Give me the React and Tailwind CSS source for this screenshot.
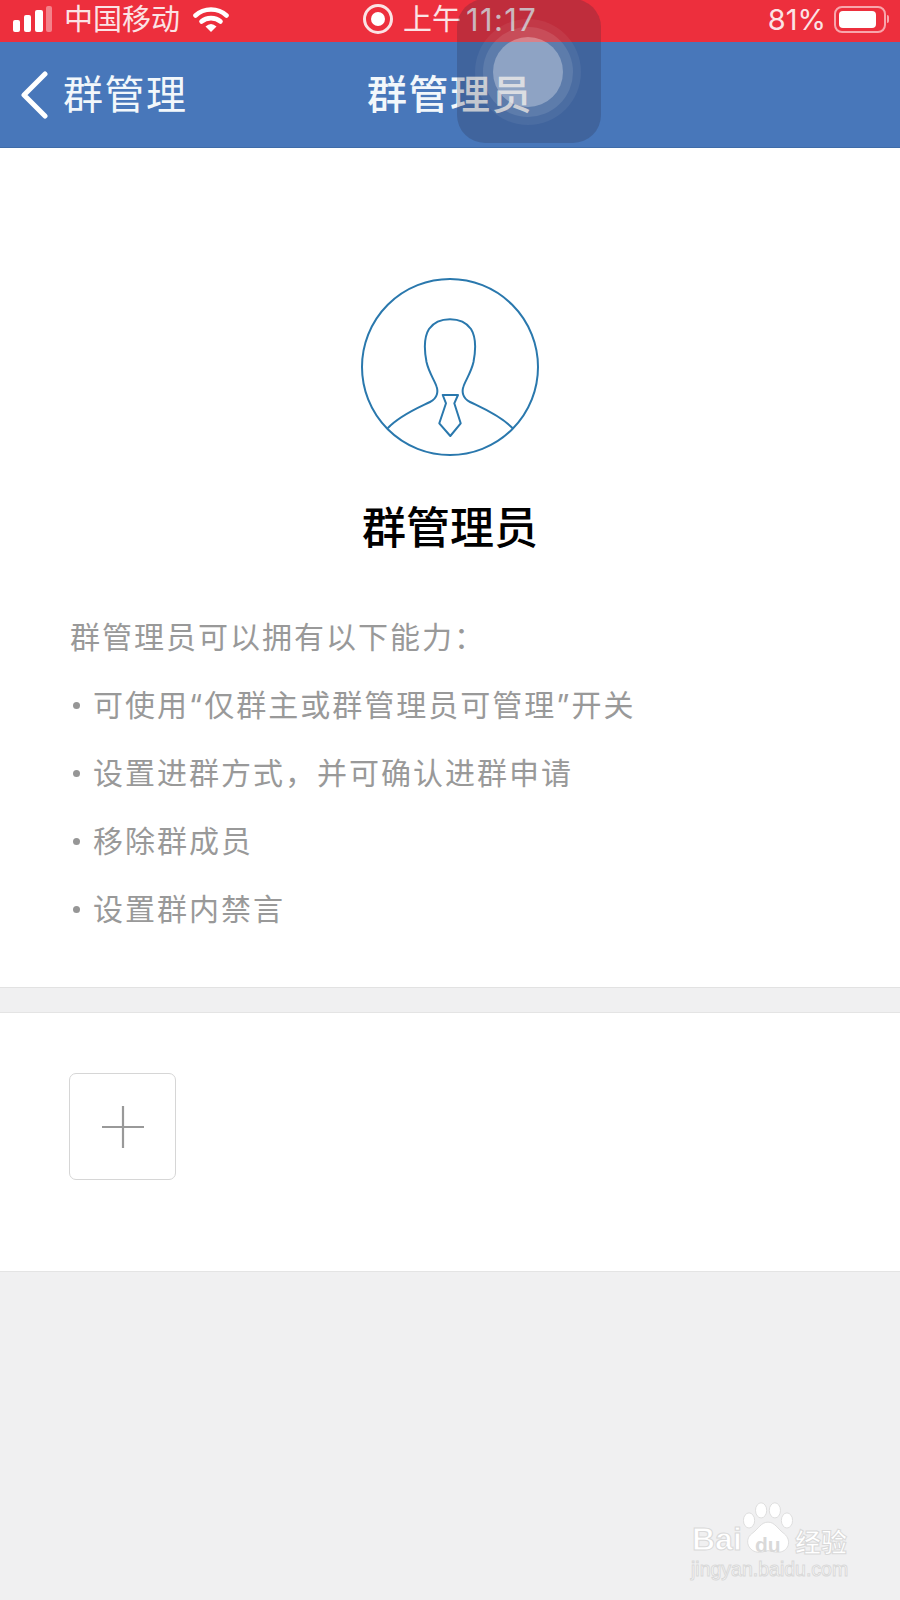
const FONT = "font-['Inter','Noto_Sans_CJK_SC',sans-serif]";

const ABILITIES = [
  '可使用“仅群主或群管理员可管理”开关',
  '设置进群方式，并可确认进群申请',
  '移除群成员',
  '设置群内禁言',
];

function SignalBars() {
  return (
    <svg width="40" height="27" viewBox="0 0 40 27" className="block">
      <rect x="0" y="14" width="7" height="12" rx="2" fill="#fff" />
      <rect x="11" y="9" width="7" height="17" rx="2" fill="#fff" />
      <rect x="22" y="4" width="8" height="22" rx="2" fill="#fff" />
      <rect x="33" y="0" width="6" height="26" rx="2" fill="#fff" fillOpacity="0.4" />
    </svg>
  );
}

function WifiGlyph() {
  return (
    <svg width="36" height="26" viewBox="0 0 36 26" className="block">
      <path d="M2.5 9.5C11 1.5 25 1.5 33.5 9.5" fill="none" stroke="#fff" strokeWidth="4.6" strokeLinecap="round" />
      <path d="M8.5 15.5C13.5 11 22.5 11 27.5 15.5" fill="none" stroke="#fff" strokeWidth="4.6" strokeLinecap="round" />
      <path d="M12.5 20.5Q18 15.5 23.5 20.5L18 26Z" fill="#fff" />
    </svg>
  );
}

function StatusBar() {
  return (
    <div className="flex h-[42px] items-center bg-[#ed2f3d] pb-[4px] text-[29px] leading-none text-[#fbe3e5]">
      <div className="flex w-[363px] items-center pl-[13px]">
        <SignalBars />
        <span className="ml-[11px] w-[129px]">中国移动</span>
        <WifiGlyph />
      </div>
      <div className="flex items-center">
        <span className="flex h-[30px] w-[30px] items-center justify-center rounded-full border-[3px] border-[#fbe3e5]">
          <span className="h-[14px] w-[14px] rounded-full bg-white" />
        </span>
        <span className="ml-[10px]">上午</span>
        <span className="ml-[5px] text-[31px] tracking-[1.4px]">11:17</span>
      </div>
      <div className="ml-auto flex items-center pr-[11px]">
        <span className="mr-[2px]">81%</span>
        <span className="ml-[6px] flex h-[27px] w-[52px] items-center rounded-[8px] border-2 border-[#f8a6ac] p-[3px]">
          <span className="h-full w-[37px] rounded-[4px] bg-white" />
        </span>
        <span className="ml-[1px] h-[8px] w-[2px] rounded-r bg-[#f8a6ac]" />
      </div>
    </div>
  );
}

function NavBar() {
  return (
    <div className="grid h-[106px] grid-cols-[1fr_auto_1fr] items-center border-b border-[#3f6ca8] bg-[#4877ba] text-[40px] leading-none tracking-[1.5px] text-[#f2f7fb]">
      <div className="flex items-center pl-[20px]">
        <svg width="28" height="48" viewBox="0 0 28 48" className="block">
          <path d="M25 3L4 24L25 45" fill="none" stroke="#fff" strokeWidth="5" strokeLinecap="round" strokeLinejoin="round" />
        </svg>
        <span className="ml-[15px]">群管理</span>
      </div>
      <div className="font-medium">群管理员</div>
      <div />
    </div>
  );
}

function AdminAvatar() {
  return (
    <svg width="180" height="180" viewBox="0 0 180 180" className="block" fill="none" stroke="#2a78ad" strokeWidth="2" strokeLinejoin="round">
      <circle cx="90" cy="90" r="88" />
      <path d="M27.7 151.3C40 138 60 130 70 125C78 121 78 114 76.7 110C75 104 69 96 66.5 85C64 72 64 60 69 52C74 45 82 42.3 90 42.3C98 42.3 106 45 111 52C116 60 116 72 113.5 85C111 96 105 104 103.3 110C102 114 102 121 110 125C120 130 140 138 152.7 151.3" />
      <path d="M82.7 118H98L94.3 126.3L100.7 146.3L90.3 159L79.3 146.3L86 126.3Z" />
    </svg>
  );
}

function AssistiveTouch() {
  return (
    <div className="absolute left-[457px] top-[-1px] flex h-[144px] w-[144px] items-center justify-center rounded-[28px] bg-[rgba(40,40,60,0.23)]">
      <div className="flex h-[106px] w-[106px] -translate-x-[1px] translate-y-[1px] items-center justify-center rounded-full bg-white/[0.06]">
        <div className="flex h-[90px] w-[90px] items-center justify-center rounded-full bg-white/10">
          <div className="h-[70px] w-[70px] rounded-full bg-white/30" />
        </div>
      </div>
    </div>
  );
}

function Watermark() {
  const stroke = '[-webkit-text-stroke:1px_#d9d9d9] text-white';
  return (
    <div className="absolute left-[689px] top-[1501px] h-[90px] w-[162px] font-['Liberation_Sans','Noto_Sans_CJK_SC',sans-serif]">
      <svg width="50" height="52" viewBox="3 0 58 62" preserveAspectRatio="none" className="absolute left-[54px] top-[1px]" fill="#fff" stroke="#d9d9d9" strokeWidth="1">
        <ellipse cx="10" cy="22" rx="6.5" ry="9" />
        <ellipse cx="24" cy="10" rx="6.5" ry="9" />
        <ellipse cx="40" cy="10" rx="6.5" ry="9" />
        <ellipse cx="54" cy="22" rx="6.5" ry="9" />
        <path d="M32 24C24 24 21 32 13 38C4 45 9 60 22 60C27 60 29 58 32 58C36 58 38 60 43 60C56 60 60 46 51 38C43 32 40 24 32 24Z" />
      </svg>
      <span className={`absolute left-[3px] top-[22px] text-[32px] font-bold leading-none ${stroke}`}>Bai</span>
      <span className="absolute left-[66px] top-[33px] text-[21px] font-bold leading-none text-[#d9d9d9]">du</span>
      <span className={`absolute left-[106px] top-[29px] whitespace-nowrap text-[26px] font-bold leading-none ${stroke}`}>经验</span>
      <span className={`absolute left-[2px] top-[59px] whitespace-nowrap text-[19.5px] leading-none ${stroke}`}>jingyan.baidu.com</span>
    </div>
  );
}

export default function App() {
  return (
    <div className={`relative h-[1600px] w-[900px] overflow-hidden bg-[#f0f0f1] ${FONT}`}>
      <StatusBar />
      <NavBar />

      <section className="flex h-[840px] flex-col border-b border-[#e2e2e2] bg-white pt-[129px]">
        <div className="flex justify-center">
          <AdminAvatar />
        </div>
        <h1 className="mt-[44px] text-center text-[44px] font-medium leading-[54px] text-black">群管理员</h1>
        <div className="mt-[48px] pl-[70px] text-[30px] leading-[68px] tracking-[2px] text-[#999]">
          <p>群管理员可以拥有以下能力：</p>
          <ul>
            {ABILITIES.map((text) => (
              <li key={text} className="flex items-center">
                <span className="ml-[3px] mr-[13px] h-[7px] w-[7px] rounded-full bg-[#969696]" />
                {text}
              </li>
            ))}
          </ul>
        </div>
      </section>

      <section className="mt-[24px] h-[260px] border-y border-[#e4e4e4] bg-white pl-[69px] pt-[60px]">
        <div className="flex h-[107px] w-[107px] items-center justify-center rounded-[7px] border-[1.5px] border-[#d6d6d6]">
          <svg width="42" height="42" viewBox="0 0 42 42" className="block">
            <path d="M21 0V42M0 21H42" stroke="#999" strokeWidth="2.2" />
          </svg>
        </div>
      </section>

      <AssistiveTouch />
      <Watermark />
    </div>
  );
}
